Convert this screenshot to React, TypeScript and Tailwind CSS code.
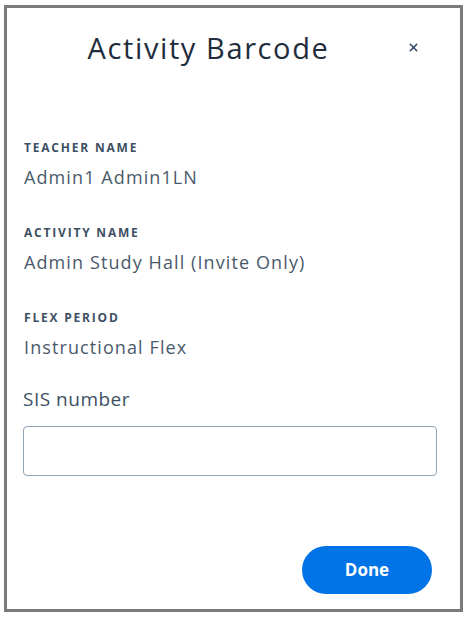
import { X } from 'lucide-react'

const fields = [
  { label: 'TEACHER NAME', value: 'Admin1 Admin1LN' },
  { label: 'ACTIVITY NAME', value: 'Admin Study Hall (Invite Only)' },
  { label: 'FLEX PERIOD', value: 'Instructional Flex' },
]

export default function App() {
  return (
    <div className="min-h-screen bg-white pl-[4px] pt-[5px] font-['Open_Sans',sans-serif]">
      <div className="flex h-[607px] w-[459px] flex-col border-[3px] border-[#7b7b7b] bg-white">
        {/* header */}
        <div className="relative flex h-[80px] items-center justify-center pr-[50px]">
          <h1 className="text-[29px] tracking-[1.6px] text-[#1f2d3d]">Activity Barcode</h1>
          <button className="absolute right-[40px] top-[33px] text-[#2f4a66]" aria-label="Close">
            <X className="h-[13px] w-[13px]" strokeWidth={3} />
          </button>
        </div>

        {/* details */}
        <div className="mt-[53px] flex flex-col gap-[38px] px-[17px]">
          {fields.map((f) => (
            <div key={f.label} className="flex flex-col">
              <span className="text-[12px] font-bold leading-[14px] tracking-[1.8px] text-[#3d4f63]">
                {f.label}
              </span>
              <span className="mt-[11px] text-[18px] leading-[22px] tracking-[1.1px] text-[#4a5a6a]">
                {f.value}
              </span>
            </div>
          ))}
        </div>

        <div className="mt-[29px] px-[16px]">
          <label className="block text-[19px] leading-[24px] tracking-[0.5px] text-[#3d4f63]">SIS number</label>
          <input className="mt-[15px] h-[50px] w-[414px] rounded-[4px] border border-[#8fa3b8] px-3 outline-none" />
        </div>

        <div className="mt-auto flex justify-end pb-[15px] pr-[28px]">
          <button className="h-[48px] w-[130px] rounded-full bg-[#0073e6] text-[17px] font-bold text-white">
            Done
          </button>
        </div>
      </div>
    </div>
  )
}
